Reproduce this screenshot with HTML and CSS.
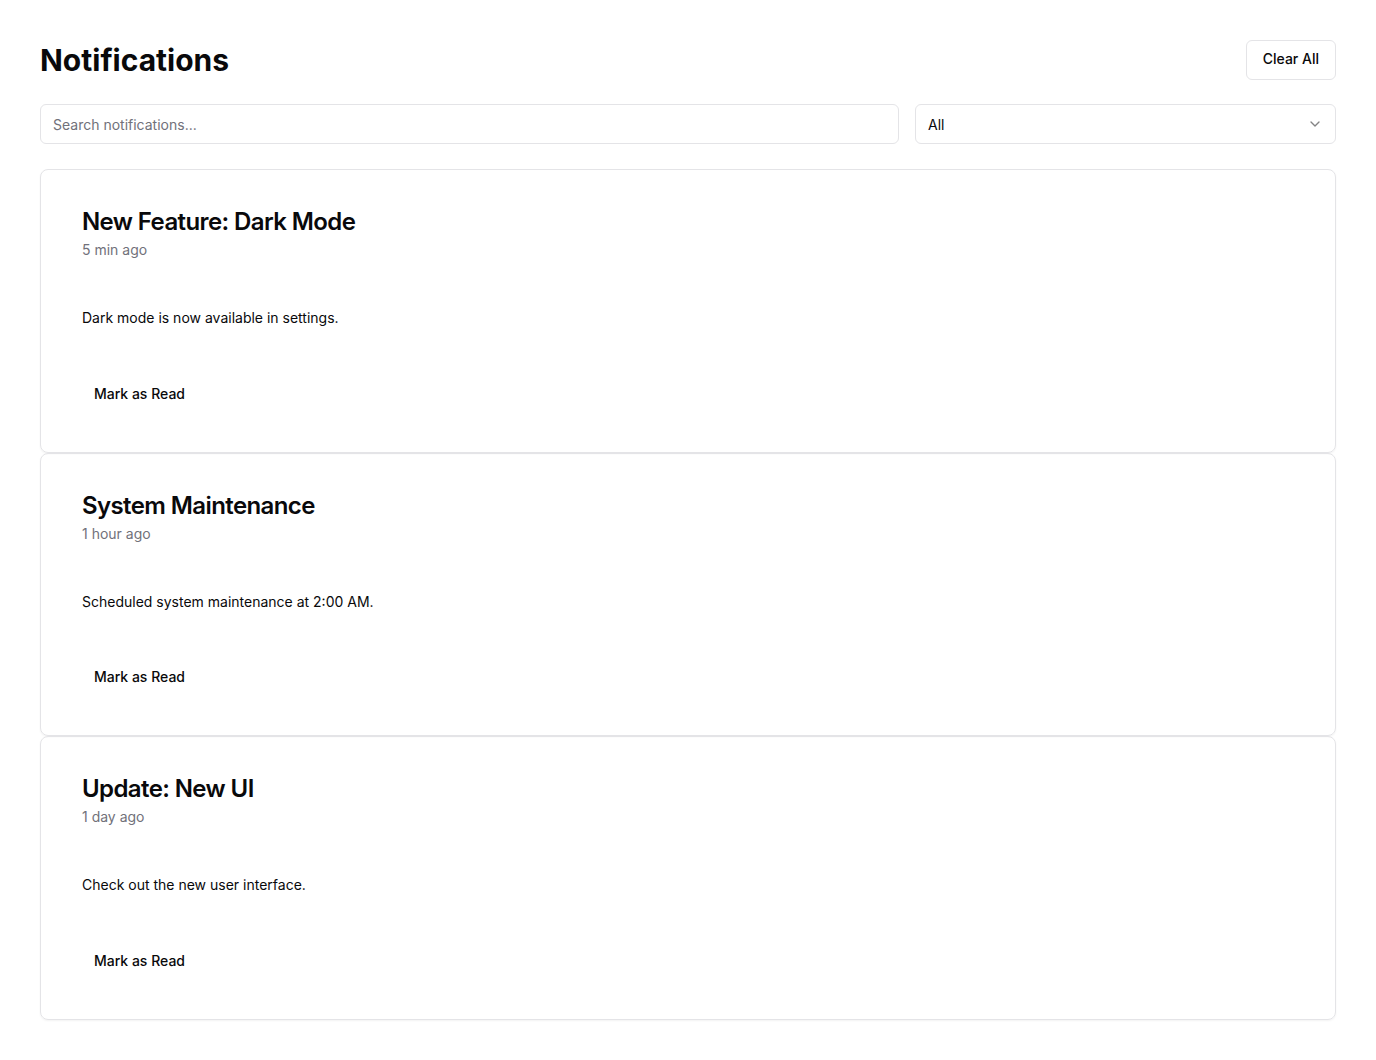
FILE: index.html
```html
<!DOCTYPE html>
<html lang="en">
<head>
<meta charset="utf-8">
<title>Notifications</title>
<link rel="stylesheet" href="styles.css">
</head>
<body>
<main class="page">
  <header class="top">
    <h1 class="title">Notifications</h1>
    <button class="btn-outline">Clear All</button>
  </header>
  <div class="filters">
    <input class="search" type="text" placeholder="Search notifications...">
    <div class="select">
      <span>All</span>
      <svg class="chev" width="16" height="16" viewBox="0 0 24 24" fill="none" stroke="currentColor" stroke-width="2" stroke-linecap="round" stroke-linejoin="round"><path d="m6 9 6 6 6-6"/></svg>
    </div>
  </div>
  <section class="list">
    <article class="card">
      <h2 class="card-title">New Feature: Dark Mode</h2>
      <p class="card-time">5 min ago</p>
      <p class="card-body">Dark mode is now available in settings.</p>
      <button class="btn-ghost">Mark as Read</button>
    </article>
    <article class="card">
      <h2 class="card-title">System Maintenance</h2>
      <p class="card-time">1 hour ago</p>
      <p class="card-body">Scheduled system maintenance at 2:00 AM.</p>
      <button class="btn-ghost">Mark as Read</button>
    </article>
    <article class="card">
      <h2 class="card-title">Update: New UI</h2>
      <p class="card-time">1 day ago</p>
      <p class="card-body">Check out the new user interface.</p>
      <button class="btn-ghost">Mark as Read</button>
    </article>
  </section>
</main>
</body>
</html>
```
FILE: styles.css
```css
* { box-sizing: border-box; }
html, body { margin: 0; padding: 0; background: #ffffff; }
body {
  font-family: Inter, "Noto Sans", sans-serif;
  color: #09090b;
}
.page { padding: 40px; }
.top {
  display: flex;
  align-items: center;
  justify-content: space-between;
  height: 40px;
}
.title {
  margin: 0;
  font-size: 30px;
  line-height: 36px;
  font-weight: 700;
}
.btn-outline {
  font-family: inherit;
  font-size: 14px;
  line-height: 20px;
  font-weight: 500;
  color: #09090b;
  background: #fff;
  border: 1px solid #e4e4e7;
  border-radius: 6px;
  height: 40px;
  padding: 0 16px 2px;
}
.filters {
  display: flex;
  gap: 16px;
  margin-top: 24px;
}
.search {
  flex: 1;
  height: 40px;
  border: 1px solid #e4e4e7;
  border-radius: 6px;
  padding: 0 12px;
  font-family: inherit;
  font-size: 14px;
  color: #09090b;
  background: #fff;
  outline: none;
}
.search::placeholder { color: #71717a; }
.select {
  width: 421px;
  height: 40px;
  border: 1px solid #e4e4e7;
  border-radius: 6px;
  padding: 0 12px;
  display: flex;
  align-items: center;
  justify-content: space-between;
  font-size: 14px;
}
.chev { color: #09090b; opacity: 0.5; }
.list { margin-top: 25px; }
.card {
  border: 1px solid #e4e4e7;
  border-radius: 8px;
  box-shadow: 0 1px 2px rgba(0,0,0,0.05);
  padding: 40px 40px 40px 41px;
  height: 283.5px;
}
.card-title {
  margin: 0;
  font-size: 24px;
  line-height: 24px;
  font-weight: 600;
  letter-spacing: -0.6px;
}
.card-time {
  margin: 6px 0 0;
  font-size: 14px;
  line-height: 20px;
  color: #71717a;
}
.card-body {
  margin: 48px 0 0;
  font-size: 14px;
  line-height: 20px;
}
.btn-ghost {
  display: block;
  margin-top: 47px;
  height: 36px;
  padding: 0 12px;
  border: 0;
  border-radius: 6px;
  background: transparent;
  font-family: inherit;
  font-size: 14px;
  font-weight: 500;
  color: #09090b;
}
```
